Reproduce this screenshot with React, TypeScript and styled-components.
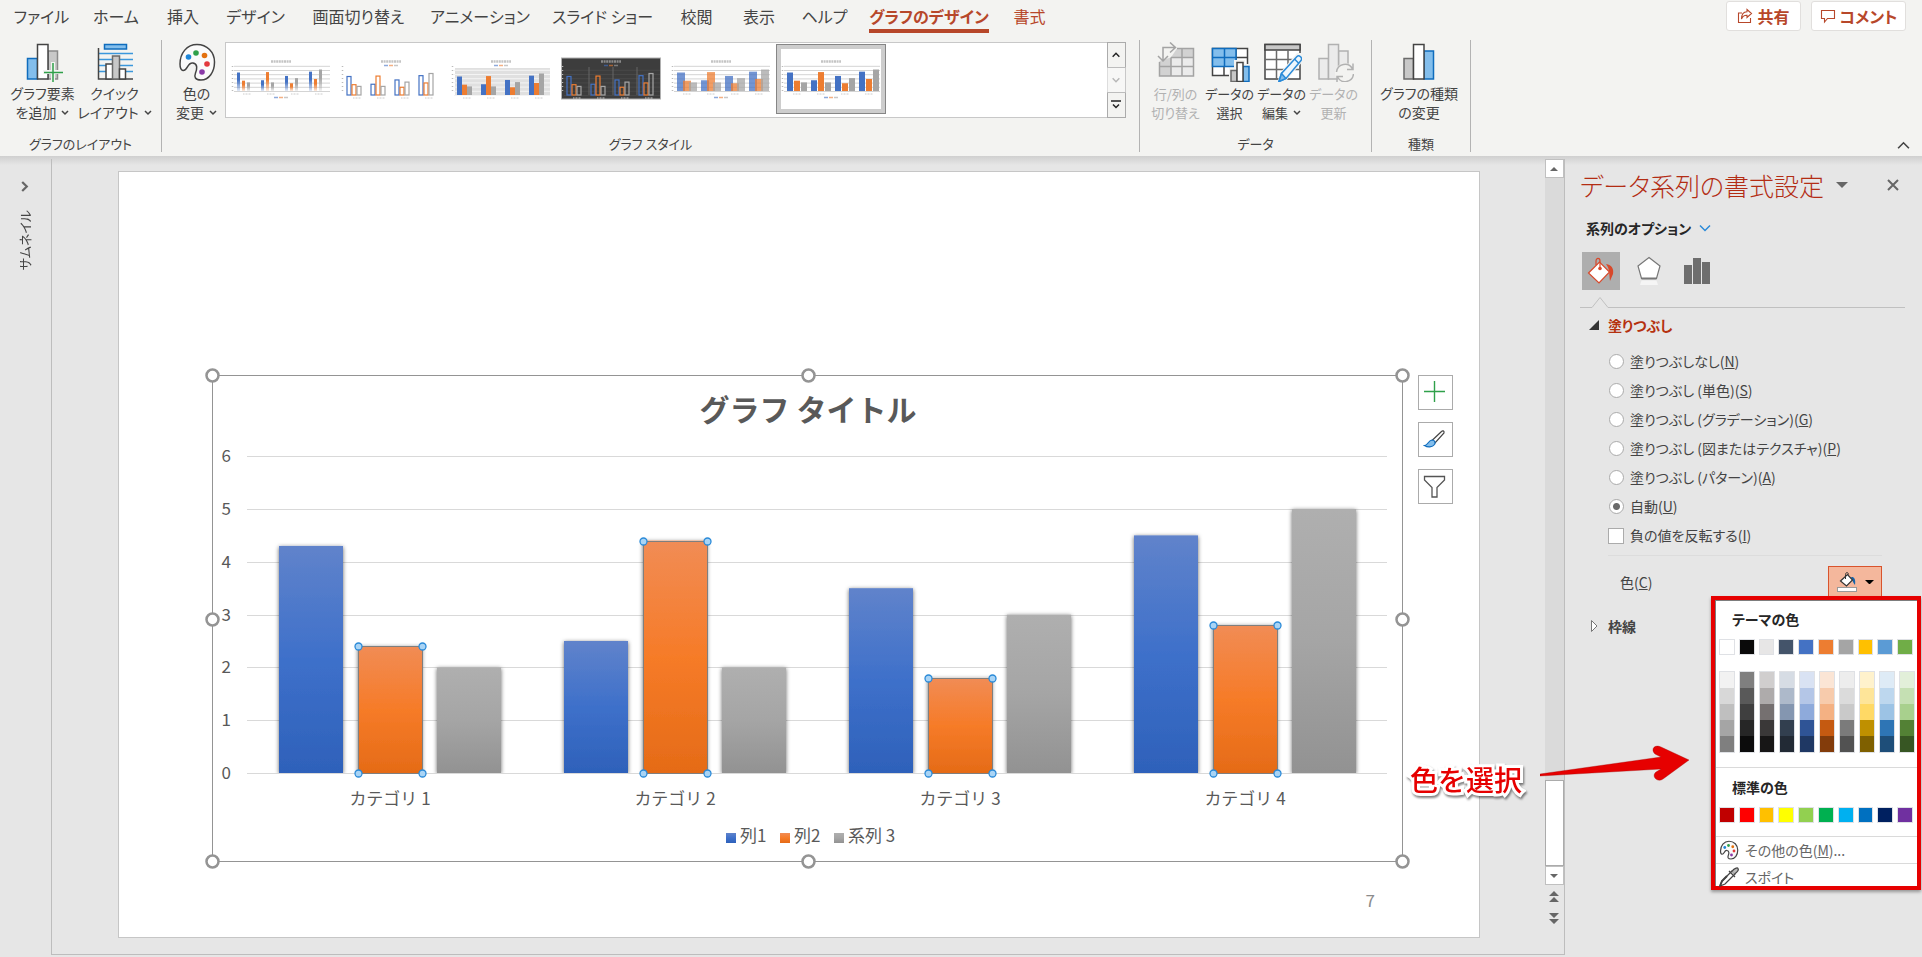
import React from "react";
import styled, { createGlobalStyle, css } from "styled-components";

const GlobalStyle = createGlobalStyle`
  *, *::before, *::after { box-sizing: border-box; }
  body {
    margin: 0;
    background: #e6e6e6;
    color: #444;
    font-family: "Noto Sans CJK JP", "Noto Sans", sans-serif;
    font-size: 14px;
    line-height: 19px;
    font-feature-settings: "palt";
  }
  button, input { font: inherit; color: inherit; font-feature-settings: inherit; }
  button { border: 0; padding: 0; background: none; cursor: pointer; }
  svg { display: block; flex: none; }
`;

/* ---------- Page frame ---------- */

const Page = styled.div`
  display: flex;
  flex-direction: column;
  min-height: 100vh;
`;

const Work = styled.div`
  flex: 1;
  display: flex;
  padding-bottom: 2px;
  background: linear-gradient(#cfcfcf, #e6e6e6 9px) #e6e6e6;
`;

/* ---------- Ribbon ---------- */

const Ribbon = styled.header`
  height: 156px;
  background: #f3f3f1;
`;

const TabBar = styled.nav`
  display: flex;
  align-items: flex-start;
  height: 40px;
  padding: 0 16px 0 3px;
`;

const Tab = styled.button<{ $width: number; $tone?: "active" | "accent" }>`
  display: flex;
  justify-content: center;
  width: ${(p) => p.$width}px;
  font-size: 16px;
  line-height: 33px;
  white-space: nowrap;
  ${(p) => p.$tone && css`color: #b7472a;`}
  span {
    ${(p) => p.$tone === "active" && css`
      font-weight: 700;
      border-bottom: 4px solid #b7472a;
      line-height: 29px;
      padding-top: 2px;
      height: 33px;
    `}
  }
`;

const TabActions = styled.div`
  display: flex;
  gap: 10px;
  margin-left: auto;
  padding-top: 1px;
`;

const ActionButton = styled.button<{ $width: number }>`
  display: flex;
  align-items: center;
  justify-content: center;
  gap: 4px;
  width: ${(p) => p.$width}px;
  height: 30px;
  border: 1px solid #e1dfdd;
  border-radius: 3px;
  background: #fff;
  color: #b7472a;
  font-size: 16px;
  font-weight: 700;
  white-space: nowrap;
`;

const Groups = styled.div`
  display: flex;
  height: 112px;
`;

const Group = styled.section<{ $width: number }>`
  display: flex;
  flex-direction: column;
  justify-content: space-between;
  width: ${(p) => p.$width}px;
  border-right: 1px solid #b3b3b3;
`;

const GroupBody = styled.div`
  display: flex;
  justify-content: center;
  padding: 2px 4px 0 0;
`;

const GroupLabel = styled.div`
  text-align: center;
  font-size: 13px;
  line-height: 16px;
`;

const RibbonButton = styled.button<{ $width: number; $compact?: boolean }>`
  display: flex;
  flex-direction: column;
  align-items: center;
  width: ${(p) => p.$width}px;
  font-size: ${(p) => (p.$compact ? 13 : 14)}px;
  white-space: nowrap;
  &:disabled { color: #b1b1b1; }
  svg + span { margin-top: 2px; }
`;

const DropMark = styled.svg`
  display: inline-block;
  margin-left: 5px;
  vertical-align: 2px;
`;

const Gallery = styled.div`
  display: flex;
  width: 901px;
  height: 76px;
  margin-left: 3px;
  border: 1px solid #c8c8c8;
  background: #fff;
`;

const StyleThumb = styled.button<{ $selected?: boolean }>`
  display: flex;
  align-items: center;
  justify-content: center;
  width: 110px;
  height: 70px;
  margin-top: 1px;
  ${(p) => p.$selected && css`
    border: 1px solid #868686;
    box-shadow: inset 0 0 0 4px #cdcdcd;
  `}
`;

const GalleryScroll = styled.div`
  display: flex;
  flex-direction: column;
  width: 19px;
  margin: -1px -1px -1px auto;
`;

const ScrollStep = styled.button`
  flex: 1;
  display: flex;
  align-items: center;
  justify-content: center;
  border: 1px solid #ababab;
  background: #f3f3f1;
  & + & { margin-top: -1px; }
  &:disabled { border-color: #c8c8c8; opacity: 0.6; }
`;

const CollapseButton = styled.button`
  align-self: flex-end;
  margin: 0 12px 0 auto;
`;

/* ---------- Left thumbnail rail ---------- */

const Rail = styled.aside`
  display: flex;
  flex-direction: column;
  align-items: center;
  gap: 18px;
  width: 52px;
  margin-top: 3px;
  padding: 22px 3px 0 0;
  border-right: 1px solid #bdbdbd;
`;

const RailLabel = styled.span`
  writing-mode: vertical-rl;
  text-orientation: sideways;
  transform: rotate(180deg);
  font-size: 13px;
`;

/* ---------- Slide ---------- */

const Editor = styled.main`
  flex: 1;
  display: flex;
  min-width: 0;
  padding: 15px 64px 16px 66px;
  border-bottom: 1px solid #bdbdbd;
`;

const Slide = styled.div`
  flex: 1;
  display: flex;
  flex-direction: column;
  min-width: 0;
  padding: 203px 76px 0 93px;
  border: 1px solid #c6c6c6;
  background: #fff;
  font-feature-settings: normal;
`;

const ChartFrame = styled.div`
  position: relative;
`;

const ChartSvg = styled.svg`
  width: 100%;
  height: auto;
  overflow: visible;
`;

const ChartTools = styled.div`
  position: absolute;
  top: 0;
  left: 100%;
  display: flex;
  flex-direction: column;
  gap: 12px;
  margin-left: 15px;
`;

const ChartTool = styled.button`
  display: flex;
  align-items: center;
  justify-content: center;
  width: 35px;
  height: 35px;
  padding-right: 2px;
  border: 1px solid #ababab;
  background: #fff;
`;

const PageNumber = styled.div`
  margin-top: auto;
  padding: 0 28px 25px 0;
  text-align: right;
  font-size: 17px;
  line-height: 24px;
  color: #8b8b8b;
`;

/* ---------- Vertical scroll bar ---------- */

const ScrollBar = styled.div`
  display: flex;
  flex-direction: column;
  align-items: center;
  width: 20px;
  padding-bottom: 30px;
  padding-top: 3px;
  border-bottom: 1px solid #bdbdbd;
`;

const ScrollTrack = styled.div`
  flex: 1;
  display: flex;
  flex-direction: column;
  justify-content: flex-end;
  width: 19px;
  background: #dadada;
`;

const ScrollThumb = styled.div`
  height: 86px;
  border: 1px solid #ababab;
  background: #fff;
`;

const ScrollEnd = styled.button`
  display: flex;
  align-items: center;
  justify-content: center;
  width: 19px;
  height: 19px;
  border: 1px solid #c0c0c0;
  background: #fff;
`;

const SlideStep = styled.button`
  margin-top: 6px;
  & + & { margin-top: 11px; }
`;

/* ---------- Format pane ---------- */

const Pane = styled.aside`
  width: 358px;
  margin-top: 3px;
  padding: 0 17px 0 15px;
  border-left: 1px solid #bdbdbd;
`;

const PaneHeader = styled.div`
  display: flex;
  align-items: center;
  height: 57px;
  padding: 0 6px 6px 0;
`;

const PaneTitle = styled.h2`
  margin: 0;
  font-size: 25px;
  font-weight: 300;
  line-height: 36px;
  color: #b32d14;
  white-space: nowrap;
`;

const PaneMenu = styled.button`
  margin-left: 12px;
`;

const PaneClose = styled.button`
  margin-left: auto;
`;

const OptionsMenu = styled.button`
  display: flex;
  align-items: center;
  gap: 8px;
  height: 24px;
  margin-left: 6px;
  font-weight: 700;
  color: #262626;
`;

const PaneTabs = styled.div`
  display: flex;
  gap: 10px;
  margin: 12px 0 6px 2px;
`;

const PaneTab = styled.button<{ $selected?: boolean }>`
  display: flex;
  align-items: center;
  justify-content: center;
  width: 38px;
  height: 38px;
  background: ${(p) => (p.$selected ? "#aeaeae" : "transparent")};
`;

const NotchRule = styled.div`
  display: flex;
  align-items: flex-end;
  height: 12px;
  &::before, &::after { content: ""; border-top: 1px solid #c0c0c0; }
  &::before { width: 12px; }
  &::after { flex: 1; }
`;

const SectionButton = styled.button<{ $open?: boolean }>`
  display: flex;
  align-items: center;
  height: 34px;
  margin-left: 9px;
  font-weight: 700;
  color: ${(p) => (p.$open ? "#b5310f" : "#444")};
  svg { width: 19px; }
`;

const FillOptions = styled.div`
  margin: 5px 23px 5px 28px;
  padding-bottom: 5px;
  border-bottom: 1px solid #dcdcdc;
`;

const Option = styled.label`
  display: flex;
  align-items: center;
  gap: 6px;
  height: 29px;
  white-space: nowrap;
`;

const Radio = styled.input`
  appearance: none;
  width: 15px;
  height: 15px;
  margin: 0 0 0 1px;
  border: 1px solid #ababab;
  border-radius: 50%;
  background: #fff;
  &:checked { background: radial-gradient(circle, #6a6a6a 3px, #fff 4px); }
`;

const Check = styled.input`
  appearance: none;
  width: 16px;
  height: 16px;
  margin: 0;
  border: 1px solid #ababab;
  background: #fff;
`;

const ColorRow = styled.div`
  display: flex;
  justify-content: space-between;
  align-items: center;
  height: 32px;
  margin: 10px 23px 11px 40px;
`;

const ColorPicker = styled.div`
  position: relative;
`;

const ColorButton = styled.button`
  display: flex;
  align-items: center;
  justify-content: center;
  gap: 8px;
  width: 54px;
  height: 32px;
  border: 1px solid #d9532c;
  background: #f4b79c;
`;

const Palette = styled.div`
  position: absolute;
  top: 30px;
  right: -39px;
  width: 210px;
  height: 294px;
  border: 4px solid #e60000;
  background: #fff;
  box-shadow: 0 2px 3px rgba(0, 0, 0, 0.35), inset 1px 1px 0 #7d7d7d;
`;

const PaletteTitle = styled.h3`
  margin: 0;
  padding-left: 17px;
  font-size: 14px;
  font-weight: 700;
  line-height: 39px;
  color: #262626;
`;

const SwatchRow = styled.div<{ $gap: number }>`
  display: flex;
  gap: 4px;
  padding: 0 4px;
  margin-bottom: ${(p) => p.$gap}px;
`;

const SwatchStack = styled.div`
  display: flex;
  flex-direction: column;
  width: 16px;
  border: 1px solid #dfe1e5;
`;

const Swatch = styled.button<{ $color: string; $stacked?: boolean }>`
  width: ${(p) => (p.$stacked ? "14px" : "16px")};
  height: 16px;
  border: ${(p) => (p.$stacked ? "0" : "1px solid #dfe1e5")};
  background: ${(p) => p.$color};
`;

const PaletteRule = styled.div`
  height: 1px;
  margin-left: 1px;
  background: #dadada;
`;

const PaletteItem = styled.button`
  display: flex;
  align-items: center;
  gap: 6px;
  width: 100%;
  height: 26px;
  padding-left: 4px;
  color: #666;
`;

const Callout = styled.div`
  position: absolute;
  top: 179px;
  right: 192px;
  display: flex;
  align-items: flex-start;
  gap: 18px;
  color: #e60000;
  font-size: 28px;
  line-height: 40px;
  font-weight: 500;
  font-feature-settings: normal;
  white-space: nowrap;
  pointer-events: none;
`;

const CalloutText = styled.span`
  margin-top: 14px;
  -webkit-text-stroke: 6px #fff;
  paint-order: stroke fill;
  filter: drop-shadow(1px 2px 1px rgba(0, 0, 0, 0.5));
`;

/* ---------- Icons ---------- */

const DARK = "#444";
const BLUE = "#0f6cbd";
const LIGHT_BLUE = "#83beec";

const Chevron = ({ w = 12, color = DARK, dir = "down", weight = 1.5 }: { w?: number; color?: string; dir?: "up" | "down" | "right"; weight?: number }) => {
  const rot = dir === "up" ? 180 : dir === "right" ? -90 : 0;
  return (
    <svg width={w} height={w} viewBox="0 0 12 12" fill="none" stroke={color} strokeWidth={weight}>
      <path d="M1 3.5L6 8.5L11 3.5" transform={`rotate(${rot} 6 6)`} />
    </svg>
  );
};

const Drop = () => (
  <DropMark width="8" height="6" viewBox="0 0 8 6" fill="none" stroke={DARK} strokeWidth="1.5">
    <path d="M1 1L4 4L7 1" />
  </DropMark>
);

const AddElementIcon = () => (
  <svg width="40" height="40" viewBox="0 0 40 40" strokeWidth="1.5">
    <rect x="4.5" y="16.5" width="10" height="20.5" fill={LIGHT_BLUE} stroke={BLUE} />
    <rect x="25" y="9" width="9.5" height="28" fill="#c8c8c8" stroke="#8a8a8a" />
    <rect x="14.5" y="2.5" width="10.5" height="34.5" fill="#fff" stroke={DARK} />
    <path d="M30 20V40M20 30H40" stroke="#f3f3f1" strokeWidth="4" />
    <path d="M30 21V40M21 30.5H40" stroke="#2fa04a" />
  </svg>
);

const QuickLayoutIcon = () => (
  <svg width="40" height="40" viewBox="0 0 40 40" strokeWidth="1.5">
    <rect x="9.5" y="2.5" width="22" height="4.5" fill={LIGHT_BLUE} stroke={BLUE} />
    <path d="M4 11.5H38M4 17.5H38M4 23.5H38M4 29.5H38" stroke="#3b97dc" />
    <path d="M3.5 6V37H38" fill="none" stroke={DARK} />
    <rect x="11" y="22" width="7" height="15" fill="#fff" stroke={DARK} />
    <rect x="17.5" y="14" width="7" height="23" fill="#c8c8c8" stroke="#6a6a6a" />
    <rect x="24.5" y="27" width="6" height="10" fill="#fff" stroke={DARK} />
  </svg>
);

const PaletteIcon = ({ size = 40 }: { size?: number }) => (
  <svg width={size} height={size} viewBox="1 0 40 40">
    <path
      d="M4 22C4 11 11 2.5 21 2.5S38.5 10 38.5 20 33 38 25 38C19 38 18 35 19.5 31 21 27 22 22 17 21 11 20 12 29 7 28.5 4.5 28 4 25 4 22Z"
      fill="#fafafa"
      stroke={DARK}
      strokeWidth={size < 30 ? 2.4 : 1.5}
    />
    <circle cx="12.5" cy="15" r="2.8" fill="#1e86d8" />
    <circle cx="20" cy="11" r="2.8" fill="#2fa04a" />
    <circle cx="28.5" cy="13.5" r="2.8" fill="#e3700e" />
    <circle cx="31" cy="22" r="2.8" fill="#e2383c" />
    <circle cx="26" cy="30" r="2.8" fill="#8a3aa8" />
  </svg>
);

const SwitchIcon = () => (
  <svg width="40" height="40" viewBox="0 0 40 40" fill="none" stroke="#a3a3a3" strokeWidth="1.5">
    <path d="M3.5 19V34H37.5V6.5H21L15 15.5Z" fill="#ebebeb" stroke="none" />
    <path d="M21 6.5H37.5V15.5H15ZM3.5 19L15 15.5V34H3.5Z" fill="#d2d2d2" stroke="none" />
    <path d="M15 15.5H37.5M3.5 24.5H37.5M3.5 20V34H37.5V6.5H21M15 15.5V34M26 6.5V34" />
    <path d="M7 19V5.5H19M2 14L7 19L12 14M14 0.5L19.5 5.5L14 10.5" />
  </svg>
);

const SelectDataIcon = () => (
  <svg width="40" height="40" viewBox="0 0 40 40" strokeWidth="1.5">
    <rect x="2.5" y="6.5" width="35" height="27" fill="#fff" stroke={DARK} />
    <path d="M14 24V33.5M26 6V33.5M26 15.5H37.5M26 24.5H37.5" stroke={DARK} />
    <rect x="2.5" y="6.5" width="23.5" height="18" fill={LIGHT_BLUE} stroke={BLUE} />
    <path d="M14.5 6.5V24.5M2.5 15.5H26" stroke={BLUE} />
    <path d="M19 40V26H24V18H35V22H40V40Z" fill="#f3f3f1" />
    <rect x="21" y="28.5" width="6" height="11" fill="#c8c8c8" stroke="#6a6a6a" />
    <rect x="33" y="24.5" width="6" height="15" fill={LIGHT_BLUE} stroke={BLUE} />
    <rect x="27" y="20.5" width="6" height="19" fill="#fff" stroke={DARK} />
  </svg>
);

const EditDataIcon = () => (
  <svg width="40" height="40" viewBox="0 0 40 40" strokeWidth="1.5">
    <rect x="3" y="2.5" width="35" height="34.5" fill="#fff" stroke={DARK} />
    <rect x="3" y="2.5" width="35" height="5.5" fill="#c8c8c8" stroke={DARK} />
    <path d="M3 17.5H38M3 27.5H38M14.5 8V37M26 8V37" stroke="#6a6a6a" />
    <path d="M15 42L18 31L35 11H42V18L24 39Z" fill="#f3f3f1" />
    <path d="M17 39.5L19.5 31.5L35 14.5C37 12.5 41 16 39 18.5L24 36.5Z" fill="#eef6fc" stroke="#2a8ad8" />
    <path d="M17 39.5L19.5 31.5L24 36.5Z" fill={LIGHT_BLUE} stroke="#2a8ad8" />
    <path d="M32.5 17L37 21.5" stroke="#2a8ad8" />
  </svg>
);

const RefreshDataIcon = () => (
  <svg width="40" height="40" viewBox="0 0 40 40" fill="#ebebeb" stroke="#b1b1b1" strokeWidth="1.5">
    <rect x="5" y="16.5" width="9.5" height="20.5" />
    <rect x="24.5" y="9" width="9.5" height="28" />
    <rect x="14.5" y="2.5" width="10" height="34.5" />
    <circle cx="31" cy="31" r="10" fill="#f3f3f1" stroke="none" />
    <path d="M22.5 30A8.5 8.5 0 0 1 38.500 27M39 21.5V27.5H33M39.5 32A8.5 8.5 0 0 1 23.500 35M23 40.5V34.5H29" fill="none" />
  </svg>
);

const ChangeTypeIcon = () => (
  <svg width="40" height="40" viewBox="0 0 40 40" strokeWidth="1.5">
    <rect x="5" y="16.5" width="9.5" height="20.5" fill="#c8c8c8" stroke="#6a6a6a" />
    <rect x="25" y="9" width="9.5" height="28" fill={LIGHT_BLUE} stroke={BLUE} />
    <rect x="14.5" y="2.5" width="10.5" height="34.5" fill="#fff" stroke={DARK} />
  </svg>
);

const ShareIcon = () => (
  <svg width="16" height="16" viewBox="0 0 16 16" fill="none" stroke="#b7472a" strokeWidth="1.1">
    <path d="M5 5H1.5V14.5H13.5V10" />
    <path d="M10 1.5L14.5 5.5L10 9.5V7.200C7 7 5.5 8.5 4.5 11C4.5 6.5 6.5 4 10 3.800Z" />
  </svg>
);

const CommentIcon = () => (
  <svg width="16" height="16" viewBox="0 0 16 16" fill="none" stroke="#b7472a" strokeWidth="1.1">
    <path d="M1.5 2.5H14.5V10.5H7.5L4.5 14V10.5H1.5Z" />
  </svg>
);

const Triangle = ({ w = 10, color = "#666", up = false }: { w?: number; color?: string; up?: boolean }) => (
  <svg width={w} height={w / 2} viewBox="0 0 10 5" fill={color}>
    <path d={up ? "M0 5L5 0L10 5Z" : "M0 0L5 5L10 0Z"} />
  </svg>
);

const DoubleTriangle = ({ up = false }: { up?: boolean }) => (
  <svg width="10" height="11" viewBox="0 0 10 11" fill="#666">
    <path d={up ? "M0 5L5 0L10 5ZM0 11L5 6L10 11Z" : "M0 0L5 5L10 0ZM0 6L5 11L10 6Z"} />
  </svg>
);

const BrushIcon = () => (
  <svg width="23" height="23" viewBox="0 0 23 23">
    <path d="M9 12.5L18.5 3.5C19.5 2.5 21.5 2.5 21 5L12 15Z" fill="#fff" stroke={DARK} strokeWidth="1.2" />
    <path d="M1.5 17.5C5 17.5 5 12.5 9 12C12 12 12.5 14.5 11.5 16.5C9.5 19.5 4.5 19.5 1.5 17.5Z" fill={LIGHT_BLUE} stroke={BLUE} strokeWidth="1.2" />
  </svg>
);

const FunnelIcon = () => (
  <svg width="23" height="23" viewBox="0 0 23 23" fill="#fff" stroke="#555" strokeWidth="1.3">
    <path d="M1.5 1.5H21.5V5L14 12.5V22H9V12.5L1.5 5Z" />
  </svg>
);

const PlusIcon = () => (
  <svg width="23" height="23" viewBox="0 0 23 23" stroke="#2fa04a" strokeWidth="1.4">
    <path d="M1 10.5H22M11.5 0V21" />
  </svg>
);

const FillIcon = () => (
  <svg width="28" height="28" viewBox="0 0 28 28">
    <path d="M19 7C25 8 27 12 26 17L23 24C22 17 23 12 19 7Z" fill="#d8482a" />
    <path d="M1.5 16L12.5 5L22.5 15L12 26Z" fill="#fff" stroke="#d8482a" strokeWidth="1.2" />
    <path d="M9 8V4C9 .5 13 .5 13 4V11" fill="none" stroke="#d8482a" strokeWidth="1.2" />
    <circle cx="13" cy="11.5" r="1.8" fill="#d8482a" />
  </svg>
);

const EffectsIcon = () => (
  <svg width="26" height="30" viewBox="0 0 26 30">
    <path d="M13 1.5L24 10L20.5 22.5H5.5L2 10Z" fill="#fff" stroke="#777" strokeWidth="1.2" />
    <path d="M5.5 22.5H20.5" stroke="#777" strokeWidth="2" />
    <path d="M5.5 24.5H20.5L22 29H4Z" fill="#f5f5f5" />
  </svg>
);

const SeriesIcon = () => (
  <svg width="26" height="26" viewBox="0 0 26 26" fill="#6e6e6e">
    <path d="M0 7H8V26H0ZM9 0H17V26H9ZM18 4H26V26H18Z" />
  </svg>
);

const BucketIcon = () => (
  <svg width="20" height="20" viewBox="0 0 20 20">
    <path d="M14 5C17 4.5 19 7 18 13C16 11 15.5 8 14 5Z" fill="#1665ab" />
    <path d="M3.5 9L10.5 2.5L15.5 8L9.5 14Z" fill="#fff" stroke="#333" strokeWidth="1.2" />
    <path d="M8.5 7V2.5C8.5 0 11.5 0 11.5 2.5" fill="none" stroke="#333" />
    <rect x=".5" y="15.5" width="19" height="4" fill="#fff" stroke="#999" />
  </svg>
);

const DropperIcon = () => (
  <svg width="20" height="20" viewBox="0 0 20 20" fill="none" stroke={DARK} strokeWidth="1.3">
    <path d="M1 19L3 14L13 4L16 7L6 17Z" fill="#fff" />
    <path d="M10 4L16 10M13 4.5C15 1 18.5 .5 19 1.5C20 3 18 5.5 15.5 7" fill="#bbb" />
    <path d="M1 19L3 14L8 9" strokeWidth="2" />
  </svg>
);

/* ---------- Chart style thumbnails ---------- */

const DATA = [
  [4.3, 2.4, 2],
  [2.5, 4.4, 2],
  [3.5, 1.8, 3],
  [4.5, 2.8, 5],
];
const SERIES = ["#4472c4", "#ed7d31", "#a5a5a5"];

type ThumbKind = "fade" | "outline" | "shaded" | "dark" | "overlap" | "solid";

const MiniChart = ({ kind }: { kind: ThumbKind }) => {
  const dark = kind === "dark";
  const line = kind === "outline" || dark;
  const top = line || kind === "shaded";
  const bottom = top ? 46 : 42;
  const barW = kind === "fade" ? 3 : line ? 4 : kind === "overlap" ? 8 : kind === "shaded" ? 5 : 6;
  const step = kind === "fade" ? 5 : line ? 5 : kind === "overlap" ? 6 : kind === "shaded" ? 5 : 7;
  const grid = dark ? "#555" : kind === "shaded" ? "#f4f4f4" : "#d4d4d4";
  return (
    <svg width="100" height="60" viewBox="0 0 100 60">
      {kind === "fade" && (
        <defs>
          {SERIES.map((c, i) => (
            <linearGradient id={`fade${i}`} key={c} x1="0" x2="0" y1="0" y2="1">
              <stop offset="0.4" stopColor={c} />
              <stop offset="1" stopColor={c} stopOpacity="0.15" />
            </linearGradient>
          ))}
        </defs>
      )}
      {dark && <rect x="0.5" y="9" width="99" height="41" fill="#3d3d3d" stroke="#b0b0b0" />}
      {kind === "shaded" && <rect x="4" y="19" width="95" height="27" fill="#e0e0e0" />}
      {kind !== "outline" &&
        [0, 1, 2, 3, 4, 5, 6].map((i) => (
          <path key={i} d={`M3 ${bottom - i * 4.2 + 0.5}H99`} stroke={grid} strokeWidth={dark ? 0.5 : 1} />
        ))}
      {dark && <path d="M28 18V46M52 18V46M76 18V46" stroke="#666" />}
      <path d="M40 12.5H60" stroke={dark ? "#8a8a8a" : "#c4c4c4"} strokeWidth="2.5" strokeDasharray="2 0.6" />
      <path d="M1.5 17V44" stroke="#bbb" strokeWidth="1.5" strokeDasharray="1 3" />
      {DATA.map((vals, c) =>
        vals.map((v, s) => {
          const h = v * 4.3;
          const x = 6 + c * 24 + s * step;
          return (
            <rect
              key={`${c}-${s}`}
              x={x}
              y={bottom - h}
              width={barW}
              height={h}
              fill={line ? (dark ? "none" : "#fff") : kind === "fade" ? `url(#fade${s})` : SERIES[s]}
              stroke={line ? SERIES[s] : "none"}
              strokeWidth="1.2"
              opacity={kind === "overlap" ? 0.75 : 1}
            />
          );
        })
      )}
      {[0, 1, 2, 3].map((c) => (
        <path key={c} d={`M${12 + c * 24} ${bottom + 3}h8`} stroke="#ccc" strokeWidth="1" strokeDasharray="1 .5" />
      ))}
      {[0, 1, 2].map((s) => (
        <path key={s} d={`M${43 + s * 5} ${top ? 16.5 : 48.5}h4`} stroke={SERIES[s]} strokeWidth="1.5" opacity=".6" />
      ))}
    </svg>
  );
};

/* ---------- Slide chart ---------- */

const UNIT = 52.8;
const BASE = 398;
const GRADIENTS = [
  ["#6083cb", "#3e70ca", "#2e61ba"],
  ["#f18c55", "#f67b28", "#e56b17"],
  ["#afafaf", "#a5a5a5", "#929292"],
];

const BarChart = () => (
  <ChartSvg viewBox="0 0 1191 487" role="img" aria-label="グラフ タイトル" fontSize="17" fill="#595959">
    <defs>
      {GRADIENTS.map((stops, i) => (
        <linearGradient id={`series${i}`} key={i} x1="0" x2="0" y1="0" y2="1">
          <stop offset="0" stopColor={stops[0]} />
          <stop offset="0.5" stopColor={stops[1]} />
          <stop offset="1" stopColor={stops[2]} />
        </linearGradient>
      ))}
      <filter id="barShadow" x="-20%" y="-10%" width="140%" height="120%">
        <feDropShadow dx="0" dy="1" stdDeviation="2" floodOpacity="0.6" />
      </filter>
      <clipPath id="plotArea">
        <rect x="30" y="60" width="1150" height={BASE - 60} />
      </clipPath>
    </defs>
    <rect x="0.5" y="0.5" width="1190" height="486" fill="none" stroke="#949494" />
    <text x="596" y="46" fontSize="30" fontWeight="700" textAnchor="middle">グラフ タイトル</text>
    {[0, 1, 2, 3, 4, 5, 6].map((v) => (
      <g key={v}>
        <path d={`M35 ${Math.round(BASE - v * UNIT) + 0.5}H1175`} stroke="#d9d9d9" />
        <text x="19" y={Math.round(BASE - v * UNIT) + 6} textAnchor="end">{v}</text>
      </g>
    ))}
    <g clipPath="url(#plotArea)">
      {DATA.map((vals, c) =>
        vals.map((v, s) => (
          <rect
            key={`${c}-${s}`}
            x={67 + c * 285 + s * 79}
            y={BASE - v * UNIT}
            width="64"
            height={v * UNIT}
            fill={`url(#series${s})`}
            filter="url(#barShadow)"
          />
        ))
      )}
    </g>
    {DATA.map((vals, c) => {
      const x = 146.5 + c * 285;
      const y = Math.round(BASE - vals[1] * UNIT) + 0.5;
      return (
        <g key={c} stroke="#7f7f7f">
          <rect x={x} y={y} width="64" height={BASE - y + 0.5} fill="none" />
          {[[x, y], [x + 64, y], [x, BASE + 0.5], [x + 64, BASE + 0.5]].map(([px, py]) => (
            <circle key={`${px}-${py}`} cx={px} cy={py} r="3.5" fill="#a9d4f5" stroke="#2a8ad8" strokeWidth="1.3" />
          ))}
        </g>
      );
    })}
    {DATA.map((_, c) => (
      <text key={c} x={178 + c * 285} y="430" textAnchor="middle">{`カテゴリ ${c + 1}`}</text>
    ))}
    {([["列1", 514], ["列2", 568], ["系列 3", 622]] as [string, number][]).map(([name, x], i) => (
      <g key={name}>
        <rect x={x} y="458" width="10" height="10" fill={`url(#series${i})`} />
        <text x={x + 14} y="467">{name}</text>
      </g>
    ))}
    {[[0, 0], [596, 0], [1190, 0], [0, 244], [1190, 244], [0, 486], [596, 486], [1190, 486]].map(([cx, cy]) => (
      <circle key={`${cx}-${cy}`} cx={cx + 0.5} cy={cy + 0.5} r="6" fill="#fff" stroke="#949494" strokeWidth="2.5" />
    ))}
  </ChartSvg>
);

/* ---------- Data ---------- */

const TABS: { label: string; width: number; tone?: "active" | "accent" }[] = [
  { label: "ファイル", width: 77 },
  { label: "ホーム", width: 72 },
  { label: "挿入", width: 62 },
  { label: "デザイン", width: 83 },
  { label: "画面切り替え", width: 123 },
  { label: "アニメーション", width: 120 },
  { label: "スライド ショー", width: 125 },
  { label: "校閲", width: 63 },
  { label: "表示", width: 62 },
  { label: "ヘルプ", width: 69 },
  { label: "グラフのデザイン", width: 140, tone: "active" },
  { label: "書式", width: 61, tone: "accent" },
];

const THUMBS: ThumbKind[] = ["fade", "outline", "shaded", "dark", "overlap", "solid"];

const FILLS = [
  ["塗りつぶしなし", "N"],
  ["塗りつぶし (単色)", "S"],
  ["塗りつぶし (グラデーション)", "G"],
  ["塗りつぶし (図またはテクスチャ)", "P"],
  ["塗りつぶし (パターン)", "A"],
  ["自動", "U"],
];

const THEME = ["#ffffff", "#0a0a0a", "#e7e6e6", "#44546a", "#4472c4", "#ed7d31", "#a5a5a5", "#ffc000", "#5b9bd5", "#70ad47"];
const SHADES = [
  ["#f2f2f2", "#d8d8d8", "#bfbfbf", "#a5a5a5", "#7f7f7f"],
  ["#7f7f7f", "#595959", "#3f3f3f", "#262626", "#0c0c0c"],
  ["#d0cece", "#aeabab", "#757070", "#3a3838", "#171616"],
  ["#d6dce4", "#adb9ca", "#8496b0", "#323f4f", "#222a35"],
  ["#d9e2f3", "#b4c6e7", "#8eaadb", "#2f5496", "#1f3864"],
  ["#fbe5d5", "#f7cbac", "#f4b183", "#c55a11", "#833c0b"],
  ["#ededed", "#dbdbdb", "#c9c9c9", "#7b7b7b", "#525252"],
  ["#fff2cc", "#fee599", "#ffd965", "#bf9000", "#7f6000"],
  ["#deebf6", "#bdd7ee", "#9cc3e5", "#2e75b5", "#1e4e79"],
  ["#e2efd9", "#c5e0b3", "#a8d08d", "#538135", "#375623"],
];
const STANDARD = ["#c00000", "#ff0000", "#ffc000", "#ffff00", "#92d050", "#00b050", "#00b0f0", "#0070c0", "#002060", "#7030a0"];

/* ---------- App ---------- */

const RibbonArea = () => (
  <Ribbon>
    <TabBar>
      {TABS.map((t) => (
        <Tab key={t.label} $width={t.width} $tone={t.tone}>
          <span>{t.label}</span>
        </Tab>
      ))}
      <TabActions>
        <ActionButton $width={75}><ShareIcon />共有</ActionButton>
        <ActionButton $width={95}><CommentIcon />コメント</ActionButton>
      </TabActions>
    </TabBar>
    <Groups>
      <Group $width={162}>
        <GroupBody>
          <RibbonButton $width={72}><AddElementIcon /><span>グラフ要素<br />を追加<Drop /></span></RibbonButton>
          <RibbonButton $width={72}><QuickLayoutIcon /><span>クイック<br />レイアウト<Drop /></span></RibbonButton>
        </GroupBody>
        <GroupLabel>グラフのレイアウト</GroupLabel>
      </Group>
      <Group $width={978}>
        <GroupBody>
          <RibbonButton $width={50}><PaletteIcon /><span>色の<br />変更<Drop /></span></RibbonButton>
          <Gallery>
            {THUMBS.map((k) => (
              <StyleThumb key={k} $selected={k === "solid"} aria-label={k}>
                <MiniChart kind={k} />
              </StyleThumb>
            ))}
            <GalleryScroll>
              <ScrollStep aria-label="上へ"><Chevron w={8} dir="up" color="#222" weight={2.2} /></ScrollStep>
              <ScrollStep aria-label="下へ" disabled><Chevron w={8} color="#888" weight={2.2} /></ScrollStep>
              <ScrollStep aria-label="その他">
                <svg width="10" height="10" viewBox="0 0 10 10" fill="none" stroke="#222" strokeWidth="1.5">
                  <path d="M0 1H10M2 4.5L5 7.5L8 4.5" />
                </svg>
              </ScrollStep>
            </GalleryScroll>
          </Gallery>
        </GroupBody>
        <GroupLabel>グラフ スタイル</GroupLabel>
      </Group>
      <Group $width={232}>
        <GroupBody>
          <RibbonButton $width={56} $compact disabled><SwitchIcon /><span>行/列の<br />切り替え</span></RibbonButton>
          <RibbonButton $width={52} $compact><SelectDataIcon /><span>データの<br />選択</span></RibbonButton>
          <RibbonButton $width={52} $compact><EditDataIcon /><span>データの<br />編集<Drop /></span></RibbonButton>
          <RibbonButton $width={52} $compact disabled><RefreshDataIcon /><span>データの<br />更新</span></RibbonButton>
        </GroupBody>
        <GroupLabel>データ</GroupLabel>
      </Group>
      <Group $width={99}>
        <GroupBody>
          <RibbonButton $width={80}><ChangeTypeIcon /><span>グラフの種類<br />の変更</span></RibbonButton>
        </GroupBody>
        <GroupLabel>種類</GroupLabel>
      </Group>
      <CollapseButton aria-label="リボンを折りたたむ"><Chevron w={13} dir="up" /></CollapseButton>
    </Groups>
  </Ribbon>
);

const FormatPane = () => (
  <Pane>
    <PaneHeader>
      <PaneTitle>データ系列の書式設定</PaneTitle>
      <PaneMenu aria-label="作業ウィンドウ オプション"><Triangle w={12} /></PaneMenu>
      <PaneClose aria-label="閉じる">
        <svg width="12" height="12" viewBox="0 0 12 12" stroke="#666" strokeWidth="2"><path d="M1 1L11 11M11 1L1 11" /></svg>
      </PaneClose>
    </PaneHeader>
    <OptionsMenu>系列のオプション<Chevron color="#2a8ad8" /></OptionsMenu>
    <PaneTabs>
      <PaneTab $selected aria-label="塗りつぶしと線"><FillIcon /></PaneTab>
      <PaneTab aria-label="効果"><EffectsIcon /></PaneTab>
      <PaneTab aria-label="系列のオプション"><SeriesIcon /></PaneTab>
    </PaneTabs>
    <NotchRule>
      <svg width="16" height="12" viewBox="0 0 16 12" fill="none" stroke="#c0c0c0"><path d="M0 11.5L8 1.5L16 11.5" /></svg>
    </NotchRule>
    <SectionButton $open aria-expanded="true">
      <svg height="10" viewBox="0 0 19 10" fill="#333"><path d="M0 10H10V0Z" /></svg>
      塗りつぶし
    </SectionButton>
    <FillOptions>
      {FILLS.map(([label, key]) => (
        <Option key={key}>
          <Radio type="radio" name="fill" defaultChecked={key === "U"} />
          <span>{label}(<u>{key}</u>)</span>
        </Option>
      ))}
      <Option>
        <Check type="checkbox" />
        <span>負の値を反転する(<u>I</u>)</span>
      </Option>
    </FillOptions>
    <ColorRow>
      <label htmlFor="fill-color">色(<u>C</u>)</label>
      <ColorPicker>
        <ColorButton id="fill-color" aria-haspopup="true"><BucketIcon /><Triangle w={9} color="#000" /></ColorButton>
        <Palette>
          <PaletteTitle>テーマの色</PaletteTitle>
          <SwatchRow $gap={16}>
            {THEME.map((c) => <Swatch key={c} $color={c} aria-label={c} />)}
          </SwatchRow>
          <SwatchRow $gap={14}>
            {SHADES.map((col, i) => (
              <SwatchStack key={i}>
                {col.map((c) => <Swatch key={c} $color={c} $stacked aria-label={c} />)}
              </SwatchStack>
            ))}
          </SwatchRow>
          <PaletteRule />
          <PaletteTitle>標準の色</PaletteTitle>
          <SwatchRow $gap={13}>
            {STANDARD.map((c) => <Swatch key={c} $color={c} aria-label={c} />)}
          </SwatchRow>
          <PaletteRule />
          <PaletteItem><PaletteIcon size={20} /><span>その他の色(<u>M</u>)...</span></PaletteItem>
          <PaletteRule />
          <PaletteItem><DropperIcon />スポイト</PaletteItem>
        </Palette>
        <Callout>
          <CalloutText>色を選択</CalloutText>
          <svg width="150" height="38" viewBox="0 0 150 38">
            <path
              d="M0 29L121 12L115 9C110 4 115 -1 121 2L149 15L123 34C117 38 111 31 116 27L121 24L0 31Z"
              fill="#e60000"
              stroke="#a00000"
              strokeOpacity=".5"
              strokeWidth=".7"
            />
          </svg>
        </Callout>
      </ColorPicker>
    </ColorRow>
    <SectionButton aria-expanded="false">
      <svg height="14" viewBox="0 0 19 14" fill="#fff" stroke="#777"><path d="M2.5 1.5L8 7L2.5 12.5Z" /></svg>
      枠線
    </SectionButton>
  </Pane>
);

export default function App() {
  return (
    <Page>
      <GlobalStyle />
      <RibbonArea />
      <Work>
        <Rail>
          <Chevron w={11} dir="right" color="#666" weight={2.4} />
          <RailLabel>サムネイル</RailLabel>
        </Rail>
        <Editor>
          <Slide>
            <ChartFrame>
              <BarChart />
              <ChartTools>
                <ChartTool aria-label="グラフ要素"><PlusIcon /></ChartTool>
                <ChartTool aria-label="グラフ スタイル"><BrushIcon /></ChartTool>
                <ChartTool aria-label="グラフ フィルター"><FunnelIcon /></ChartTool>
              </ChartTools>
            </ChartFrame>
            <PageNumber>7</PageNumber>
          </Slide>
        </Editor>
        <ScrollBar>
          <ScrollEnd aria-label="上にスクロール"><Triangle w={8} up /></ScrollEnd>
          <ScrollTrack><ScrollThumb /></ScrollTrack>
          <ScrollEnd aria-label="下にスクロール"><Triangle w={8} /></ScrollEnd>
          <SlideStep aria-label="前のスライド"><DoubleTriangle up /></SlideStep>
          <SlideStep aria-label="次のスライド"><DoubleTriangle /></SlideStep>
        </ScrollBar>
        <FormatPane />
      </Work>
    </Page>
  );
}
